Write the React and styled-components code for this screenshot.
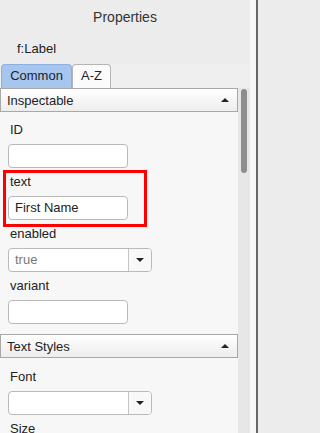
import React from 'react';
import styled, { createGlobalStyle } from 'styled-components';

const GlobalStyle = createGlobalStyle`
  html, body {
    margin: 0;
    padding: 0;
    background: #ececec;
  }
  body {
    font-family: "Liberation Sans", Arial, sans-serif;
    font-size: 13px;
    color: #222;
  }
`;

const Frame = styled.div`
  display: flex;
  width: 258px;
  height: 433px;
  overflow: hidden;
`;

const Panel = styled.div`
  display: flex;
  flex-direction: column;
  width: 250px;
  background: #ececec;
`;

const Gutter = styled.div`
  width: 6px;
  background: #f6f6f6;
`;

const Edge = styled.div`
  width: 2px;
  background: #666;
`;

const Title = styled.div`
  height: 34px;
  line-height: 34px;
  text-align: center;
  font-size: 14px;
  color: #333;
`;

const ObjectName = styled.div`
  height: 30px;
  line-height: 30px;
  padding-left: 17px;
  font-size: 13px;
  color: #222;
`;

const TabBar = styled.div`
  display: flex;
  align-items: flex-end;
  height: 24px;
  padding-left: 1px;
  background: #efefef;
`;

const Tab = styled.div`
  box-sizing: border-box;
  width: ${p => p.$width}px;
  height: 24px;
  line-height: 22px;
  text-align: center;
  border: 1px solid ${p => (p.$active ? '#8eb0de' : '#b4b4b4')};
  border-bottom: none;
  border-radius: 4px 4px 0 0;
  background: ${p => (p.$active ? '#a6c6f0' : '#fbfbfb')};
  color: #222;
  font-size: 13px;
`;

const ScrollArea = styled.div`
  display: flex;
  flex: 1;
  min-height: 0;
`;

const Content = styled.div`
  width: 238px;
  background: #f7f7f7;
  overflow: hidden;
`;

const Track = styled.div`
  width: 12px;
  padding-top: 1px;
  background: #e7e7e7;
`;

const Thumb = styled.div`
  width: 6px;
  height: 84px;
  margin-left: 3px;
  border-radius: 3px;
  background: #8d8d8d;
`;

const SectionHeader = styled.div`
  box-sizing: border-box;
  display: flex;
  align-items: center;
  justify-content: space-between;
  height: 24px;
  padding: 0 8px 0 6px;
  border: 1px solid #a8a8a8;
  background: linear-gradient(#ffffff, #ededed);
  font-size: 13px;
  color: #222;
`;

const Caret = styled.span`
  width: 0;
  height: 0;
  border-left: 4px solid transparent;
  border-right: 4px solid transparent;
  ${p => (p.$down ? 'border-top: 4px solid #222;' : 'border-bottom: 4px solid #222;')}
`;

const Body = styled.div`
  padding: ${p => p.$top}px 0 6px 8px;
`;

const Field = styled.div`
  margin-bottom: 4px;
`;

const Label = styled.div`
  height: 20px;
  line-height: 20px;
  margin-bottom: 4px;
  padding-left: 2px;
  font-size: 13px;
  color: #222;
`;

const TextInput = styled.div`
  box-sizing: border-box;
  width: 120px;
  height: 24px;
  line-height: 22px;
  padding-left: 6px;
  border: 1px solid #bababa;
  border-radius: 4px;
  background: #fff;
  font-size: 13px;
  color: #222;
`;

const Select = styled.div`
  box-sizing: border-box;
  display: flex;
  width: 144px;
  height: 24px;
  border: 1px solid #bababa;
  border-radius: 4px;
  background: #fff;
  overflow: hidden;
`;

const SelectValue = styled.div`
  flex: 1;
  line-height: 22px;
  padding-left: 6px;
  color: #777;
  font-size: 13px;
`;

const SelectButton = styled.div`
  display: flex;
  align-items: center;
  justify-content: center;
  width: 22px;
  border-left: 1px solid #c4c4c4;
  background: #f8f8f8;
`;

const Highlight = styled.div`
  position: relative;
  &::after {
    content: '';
    position: absolute;
    left: -5px;
    top: -2px;
    width: 144px;
    height: 57px;
    box-sizing: border-box;
    border: 3px solid #ff0000;
    pointer-events: none;
  }
`;

const InputField = ({ label, value }) => (
  <Field>
    <Label>{label}</Label>
    <TextInput>{value}</TextInput>
  </Field>
);

const SelectField = ({ label, value }) => (
  <Field>
    <Label>{label}</Label>
    <Select>
      <SelectValue>{value}</SelectValue>
      <SelectButton>
        <Caret $down />
      </SelectButton>
    </Select>
  </Field>
);

export default function App() {
  return (
    <>
      <GlobalStyle />
      <Frame>
        <Panel>
          <Title>Properties</Title>
          <ObjectName>f:Label</ObjectName>
          <TabBar>
            <Tab $active $width={71}>Common</Tab>
            <Tab $width={39}>A-Z</Tab>
          </TabBar>
          <ScrollArea>
            <Content>
              <SectionHeader>
                Inspectable
                <Caret />
              </SectionHeader>
              <Body $top={8}>
                <InputField label="ID" />
                <Highlight>
                  <InputField label="text" value="First Name" />
                </Highlight>
                <SelectField label="enabled" value="true" />
                <InputField label="variant" />
              </Body>
              <SectionHeader>
                Text Styles
                <Caret />
              </SectionHeader>
              <Body $top={9}>
                <SelectField label="Font" />
                <Field>
                  <Label>Size</Label>
                </Field>
              </Body>
            </Content>
            <Track>
              <Thumb />
            </Track>
          </ScrollArea>
        </Panel>
        <Gutter />
        <Edge />
      </Frame>
    </>
  );
}
